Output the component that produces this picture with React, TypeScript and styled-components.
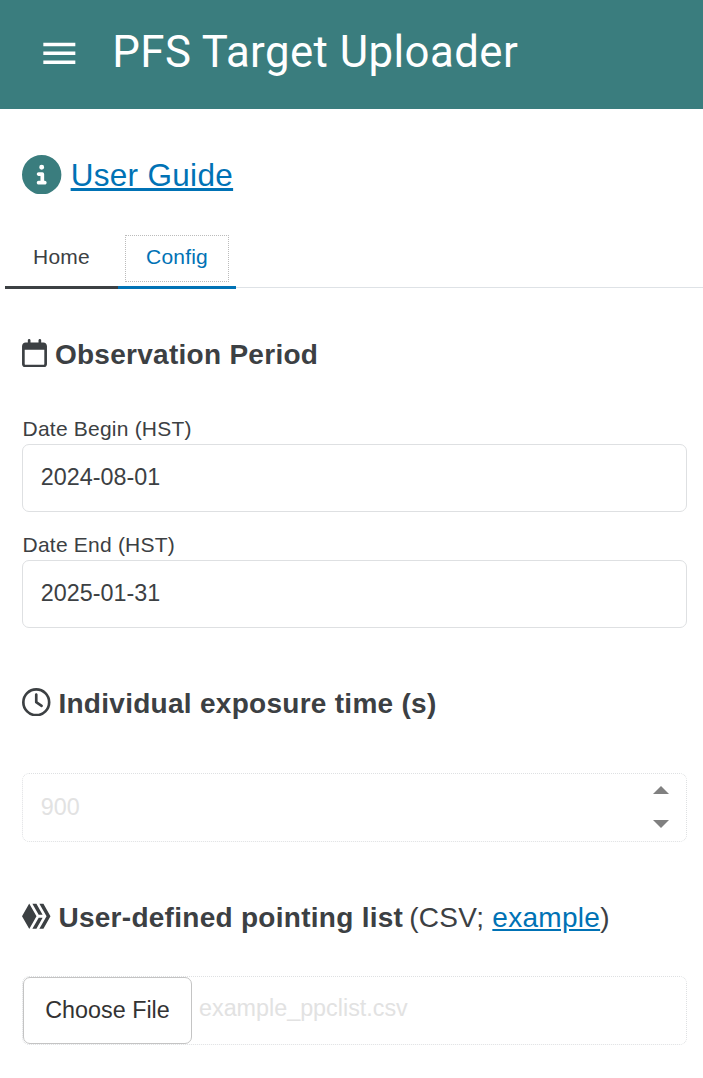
import React from "react";
import styled, { createGlobalStyle } from "styled-components";
import { FaCircleInfo, FaHive, FaRegCalendar, FaRegClock } from "react-icons/fa6";

const GlobalStyle = createGlobalStyle`
  *, *::before, *::after { box-sizing: border-box; }
  body {
    margin: 0;
    background: #fff;
    color: #3c4043;
    font-family: "Liberation Sans", Arial, sans-serif;
    font-size: 21px;
    letter-spacing: 0.01em;
    overflow: hidden;
  }
`;

const Header = styled.header`
  display: flex;
  align-items: center;
  height: 109px;
  padding: 0 37.6px 4px;
  background: #3a7d7e;
  color: #fff;
`;

const MenuButton = styled.button`
  display: flex;
  padding: 0;
  margin-top: 1.4px;
  border: 0;
  background: none;
  color: inherit;
`;

const Title = styled.h1`
  margin: -1px 0 0 32px;
  font: 400 43.75px/56px Roboto, sans-serif;
  letter-spacing: 0.01em;
  white-space: nowrap;
`;

const Link = styled.a`
  color: #0072b5;
  text-decoration: underline;
`;

const Guide = styled.div`
  display: flex;
  align-items: center;
  gap: 9px;
  height: 40px;
  margin: 46px 22px 0;
  font-size: 31.5px;
  line-height: 40px;
  letter-spacing: 0.315px;

  svg { color: #3a7d7e; margin: -1px 0 0 0.25px; }
`;

const Tabs = styled.nav`
  display: flex;
  height: 59px;
  margin: 35px 0 0 5px;
  background: linear-gradient(#dee2e6, #dee2e6) 0 57px / 100% 1px no-repeat;
`;

const Tab = styled.button<{ $active?: boolean }>`
  width: ${(p) => (p.$active ? 118 : 113)}px;
  padding: 5px 7px 4px;
  border: 0;
  border-bottom: 3px solid ${(p) => (p.$active ? "#0072b5" : "#3c4043")};
  background: none;
  color: ${(p) => (p.$active ? "#0072b5" : "#3c4043")};
  font: inherit;
  letter-spacing: inherit;
`;

const TabLabel = styled.span<{ $focused?: boolean }>`
  display: block;
  height: 47px;
  width: ${(p) => (p.$focused ? "104px" : "auto")};
  border: 1px dotted ${(p) => (p.$focused ? "#bbb" : "transparent")};
  line-height: 41px;
`;

const Section = styled.section<{ $top: number }>`
  margin: ${(p) => p.$top}px 16px 0 22px;
`;

const Heading = styled.h2<{ $below: number }>`
  display: flex;
  align-items: center;
  height: 32px;
  margin: 0 0 ${(p) => p.$below}px;
  padding-left: 0.4px;
  font-size: 28px;
  line-height: 32px;
  letter-spacing: 0.28px;
  white-space: pre;

  svg { flex: none; margin: -4px 7.5px 0 0; }
`;

const CalendarIcon = styled(FaRegCalendar)`
  width: 25px;
  height: 28.5px;
`;

const HeadingNote = styled.span`
  margin-left: 6px;
  font-weight: 400;
`;

const Label = styled.label`
  display: block;
  height: 28px;
  padding-left: 0.6px;
  line-height: 26px;
`;

const Field = styled.div<{ $disabled?: boolean }>`
  display: flex;
  align-items: center;
  justify-content: space-between;
  height: ${(p) => (p.$disabled ? 69 : 68)}px;
  padding: 0 17px ${(p) => (p.$disabled ? 0 : 2)}px 17.8px;
  border: 1px ${(p) => (p.$disabled ? "dotted" : "solid")} #dee0e2;
  border-radius: 7px;
  color: ${(p) => (p.$disabled ? "#e2e2e2" : "#3c4043")};
  font-size: 23.333px;
  letter-spacing: 0;

  & + label { margin-top: 20px; }
`;

const FileField = styled(Field)`
  justify-content: flex-start;
  padding: 0;
`;

const FileButton = styled.button`
  width: 169px;
  height: 67px;
  padding: 0;
  border: 1px solid #c4c4c4;
  border-radius: 7px;
  background: #fff;
  color: #333;
  font: 23.333px "Liberation Sans", Arial, sans-serif;
`;

const FileName = styled.span`
  margin: -4px 0 0 7px;
`;

const Spinner = styled.svg`
  margin-top: -1px;
  fill: #808080;
`;

export default function App() {
  return (
    <>
      <GlobalStyle />
      <Header>
        <MenuButton aria-label="Menu">
          <svg width="42.67" height="42.67" viewBox="0 0 24 24" fill="currentColor">
            <path d="M3 18h18v-2H3v2zm0-5h18v-2H3v2zm0-7v2h18V6H3z" />
          </svg>
        </MenuButton>
        <Title>PFS Target Uploader</Title>
      </Header>
      <Guide>
        <FaCircleInfo size={39.4} />
        <Link>User Guide</Link>
      </Guide>
      <Tabs>
        <Tab><TabLabel>Home</TabLabel></Tab>
        <Tab $active><TabLabel $focused>Config</TabLabel></Tab>
      </Tabs>
      <Section $top={50}>
        <Heading $below={45}>
          <CalendarIcon />
          Observation Period
        </Heading>
        <Label>Date Begin (HST)</Label>
        <Field>2024-08-01</Field>
        <Label>Date End (HST)</Label>
        <Field>2025-01-31</Field>
      </Section>
      <Section $top={60}>
        <Heading $below={53}>
          <FaRegClock size={28.5} />
          Individual exposure time (s)
        </Heading>
        <Field $disabled>
          900
          <Spinner width="16" height="42" viewBox="0 0 16 42">
            <path d="M0 8 8 0l8 8zM0 34h16l-8 8z" />
          </Spinner>
        </Field>
      </Section>
      <Section $top={60}>
        <Heading $below={42}>
          <FaHive size={28.5} />
          User-defined pointing list
          <HeadingNote>(CSV; <Link>example</Link>)</HeadingNote>
        </Heading>
        <FileField $disabled>
          <FileButton>Choose File</FileButton>
          <FileName>example_ppclist.csv</FileName>
        </FileField>
      </Section>
    </>
  );
}
